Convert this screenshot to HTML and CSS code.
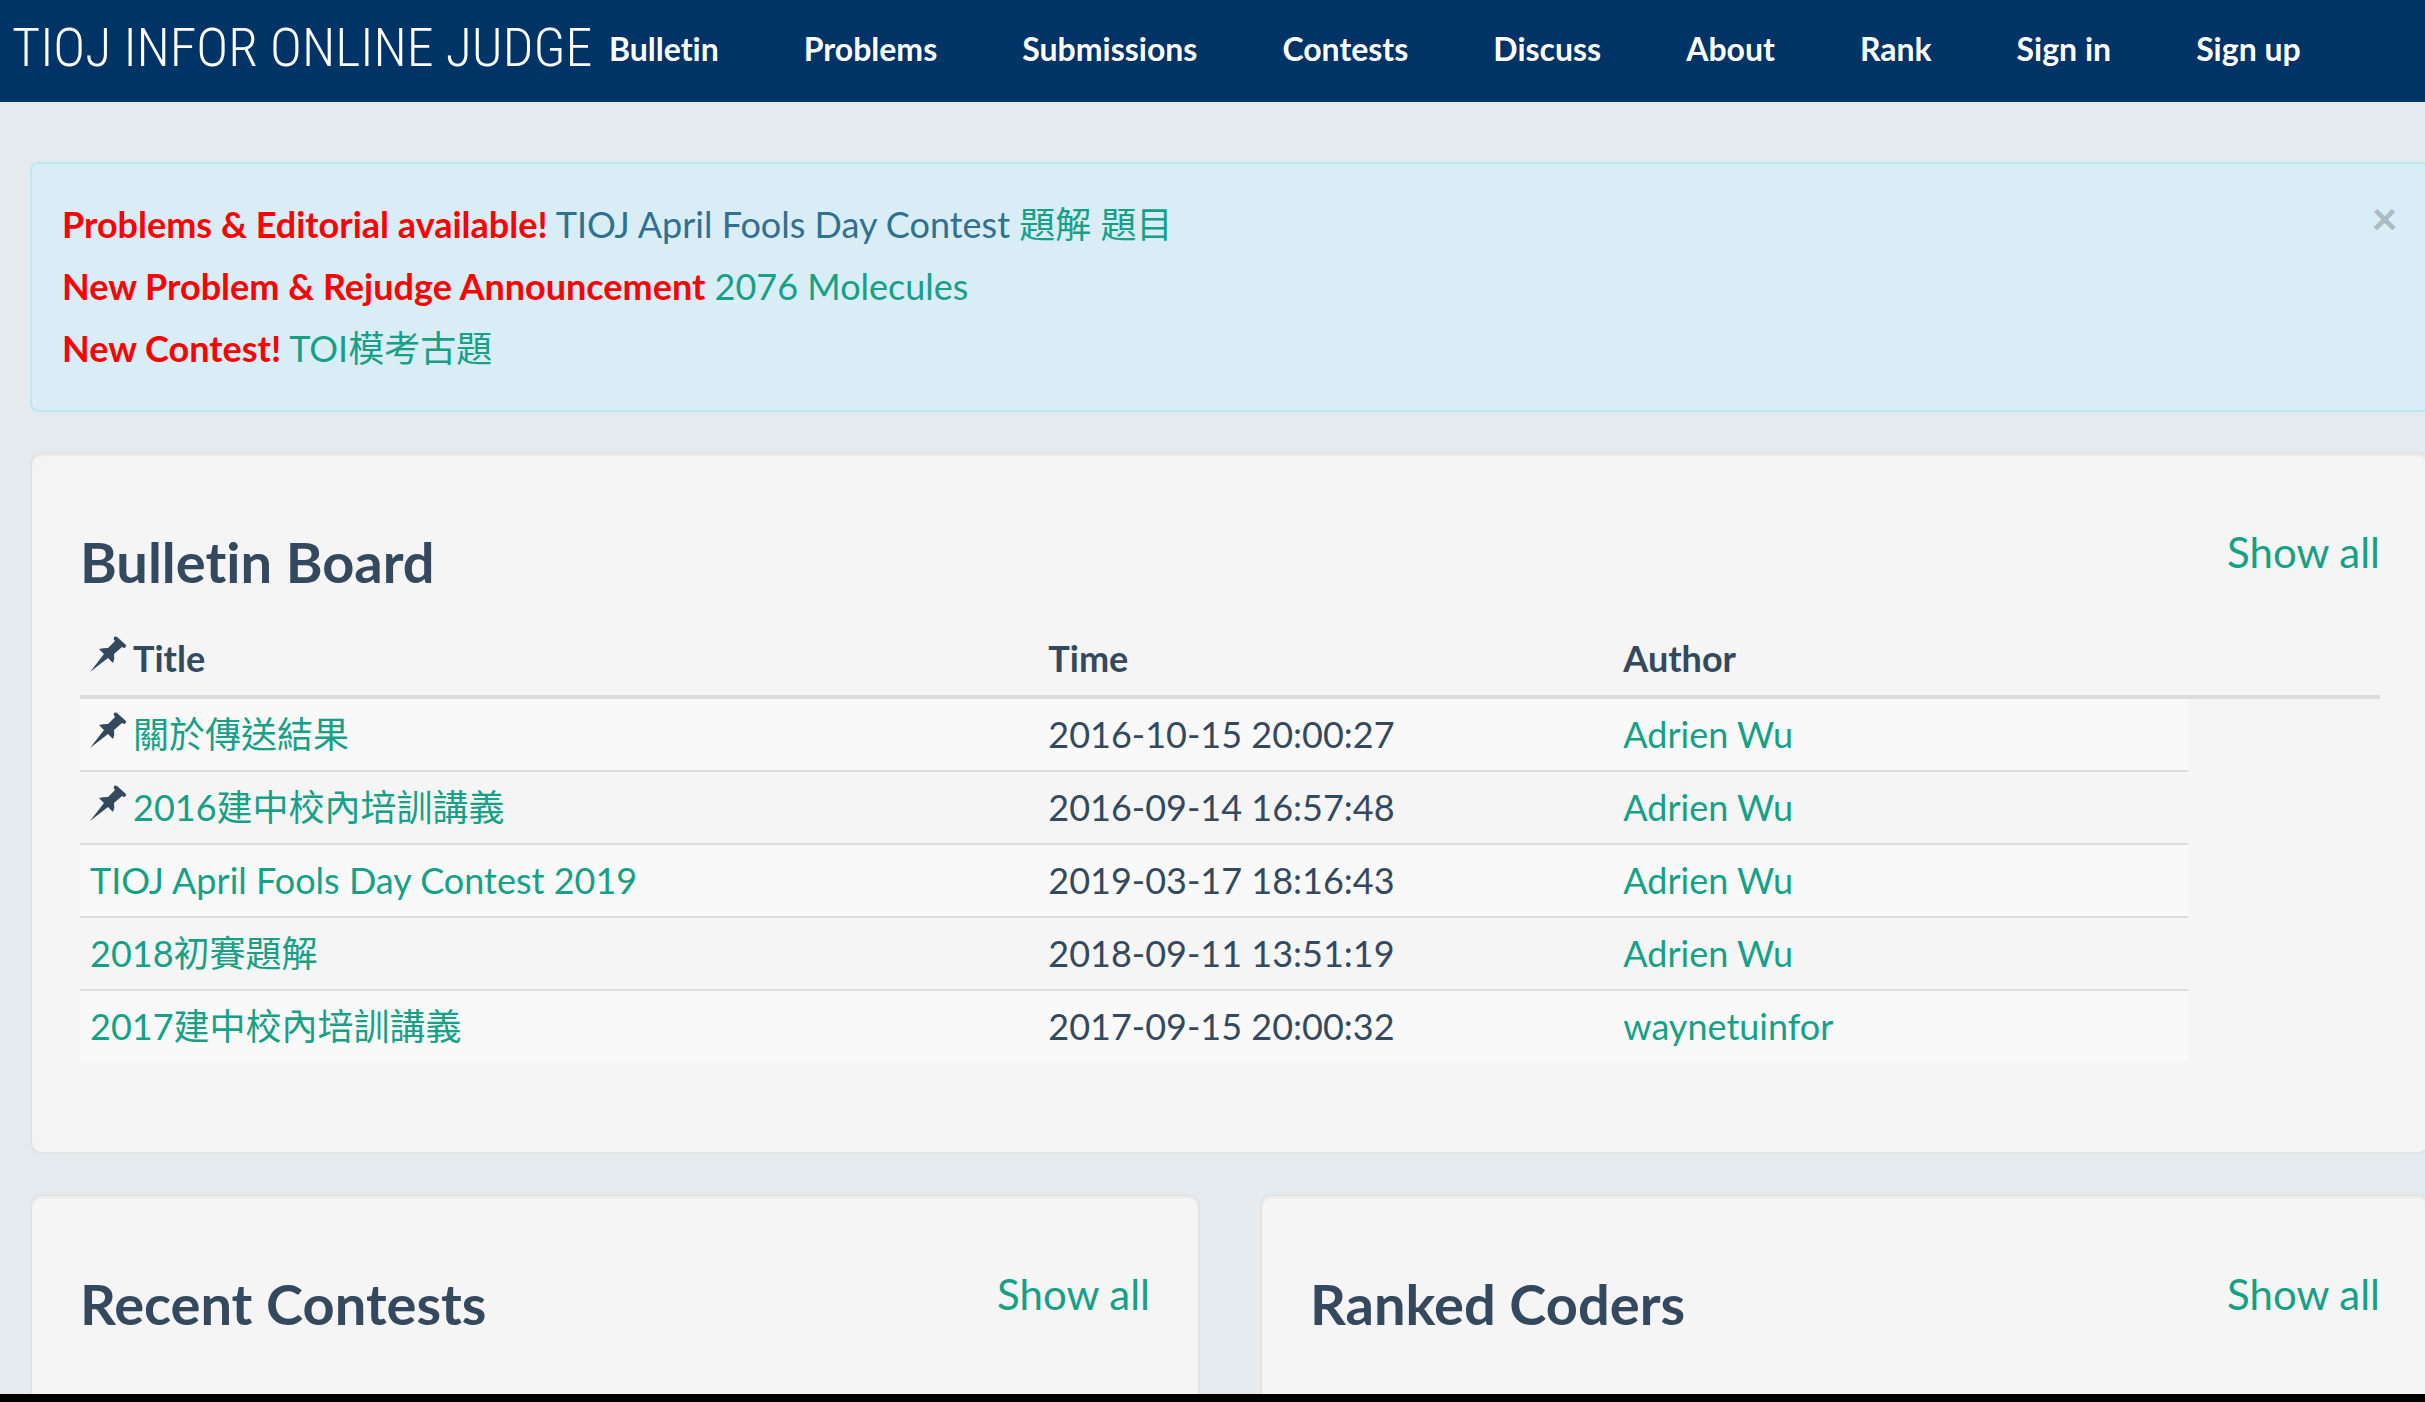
FILE: index.html
```html
<!DOCTYPE html>
<html lang="zh-Hant">
<head>
<meta charset="utf-8">
<meta name="viewport" content="width=device-width, initial-scale=1">
<title>TIOJ Infor Online Judge</title>
<link rel="stylesheet" href="styles.css">
</head>
<body>
<svg class="sprite" aria-hidden="true">
  <symbol id="pin" viewBox="0 0 36 36">
    <path d="M24 1Q26 0 27 1L36 9Q36 12 34 12L32 11L24 18Q25 23 23 27L18 22Q9 29 0 36Q7 27 14 18L9 13Q13 12 18 12L25 5Q23 3 24 1Z"/>
  </symbol>
</svg>
<header class="navbar">
  <a class="brand" href="#">TIOJ INFOR ONLINE JUDGE</a>
  <nav class="menu">
    <a href="#">Bulletin</a>
    <a href="#">Problems</a>
    <a href="#">Submissions</a>
    <a href="#">Contests</a>
    <a href="#">Discuss</a>
    <a href="#">About</a>
    <a href="#">Rank</a>
    <a href="#">Sign in</a>
    <a href="#">Sign up</a>
  </nav>
</header>
<main class="content">
  <section class="alert">
    <div class="news">
      <p><strong>Problems &amp; Editorial available!</strong> TIOJ April Fools Day Contest <a href="#">題解</a> <a href="#">題目</a></p>
      <p><strong>New Problem &amp; Rejudge Announcement</strong> <a href="#">2076 Molecules</a></p>
      <p><strong>New Contest!</strong> <a href="#">TOI模考古題</a></p>
    </div>
    <button class="close" type="button" aria-label="Close">×</button>
  </section>
  <section class="panel bulletin">
    <div class="panel-head">
      <h2>Bulletin Board</h2>
      <a href="#">Show all</a>
    </div>
    <table class="posts">
      <thead>
        <tr><th class="wide"><svg class="pin"><use href="#pin"/></svg>Title</th><th class="mid">Time</th><th class="mid">Author</th><th></th></tr>
      </thead>
      <tbody>
        <tr><td><svg class="pin"><use href="#pin"/></svg><a href="#">關於傳送結果</a></td><td>2016-10-15 20:00:27</td><td><a href="#">Adrien Wu</a></td></tr>
        <tr><td><svg class="pin"><use href="#pin"/></svg><a href="#">2016建中校內培訓講義</a></td><td>2016-09-14 16:57:48</td><td><a href="#">Adrien Wu</a></td></tr>
        <tr><td><a href="#">TIOJ April Fools Day Contest 2019</a></td><td>2019-03-17 18:16:43</td><td><a href="#">Adrien Wu</a></td></tr>
        <tr><td><a href="#">2018初賽題解</a></td><td>2018-09-11 13:51:19</td><td><a href="#">Adrien Wu</a></td></tr>
        <tr><td><a href="#">2017建中校內培訓講義</a></td><td>2017-09-15 20:00:32</td><td><a href="#">waynetuinfor</a></td></tr>
      </tbody>
    </table>
  </section>
  <div class="columns">
    <section class="panel">
      <div class="panel-head">
        <h2>Recent Contests</h2>
        <a href="#">Show all</a>
      </div>
    </section>
    <section class="panel">
      <div class="panel-head">
        <h2>Ranked Coders</h2>
        <a href="#">Show all</a>
      </div>
    </section>
  </div>
</main>
<footer class="bottom-bar"></footer>
</body>
</html>
```

FILE: styles.css
```css
* {
  box-sizing: border-box;
}

body {
  display: flex;
  flex-direction: column;
  height: 100vh;
  margin: 0;
  overflow: hidden;
  background: #e5eaee;
  color: #34495e;
  font: 36px/51px Lato, "Noto Sans CJK TC", sans-serif;
  font-variant-ligatures: none;
}

a {
  color: #16a085;
  text-decoration: none;
}

.sprite {
  position: absolute;
  width: 0;
  height: 0;
}

/* Top navigation */
.navbar {
  display: flex;
  flex: none;
  align-items: center;
  height: 102px;
  padding: 0 0 6px 12px;
  background: #003366;
  white-space: nowrap;
}

.brand {
  flex: 0 0 597px;
  color: #fff;
  font: 300 54px/92px "Roboto Condensed", "Liberation Sans Narrow", Lato, sans-serif;
}

.menu {
  display: flex;
  gap: 85px;
}

.menu a {
  color: #fff;
  font-size: 32px;
  font-weight: 700;
}

/* Page body runs slightly past the right edge of the window */
.content {
  display: flex;
  flex: 1;
  flex-direction: column;
  gap: 40px;
  min-height: 0;
  margin-right: -5px;
  padding: 60px 0 0 30px;
  overflow: hidden;
}

.alert {
  display: flex;
  flex: none;
  justify-content: space-between;
  align-items: flex-start;
  padding: 29px 30px 31px;
  border: 2px solid #bce8f1;
  border-radius: 8px;
  background: #d9edf7;
  color: #31708f;
  line-height: 62px;
}

.alert p {
  margin: 0;
}

.alert strong {
  color: #f00;
}

.close {
  padding: 0;
  border: 0;
  background: none;
  color: #000;
  font: 900 46px/50px Lato, sans-serif;
  opacity: 0.2;
  text-shadow: 0 2px 0 #fff;
}

.panel {
  flex: none;
  padding: 48px;
  border: 2px solid #e3e3e3;
  border-radius: 12px;
  background: #f5f5f5;
  box-shadow: inset 0 2px 2px rgba(0, 0, 0, 0.05);
}

.bulletin {
  padding-bottom: 90px;
}

.panel-head {
  display: flex;
  justify-content: space-between;
  align-items: flex-start;
  padding-top: 20px;
}

.panel-head h2 {
  margin: 4px 0 26px;
  font-size: 56px;
  line-height: 72px;
}

.panel-head a {
  font-size: 42px;
  line-height: 60px;
}

.columns {
  display: grid;
  flex: 1;
  grid-template-columns: 1fr 1fr;
  gap: 60px;
}

.columns .panel {
  border-bottom: 0;
  border-radius: 12px 12px 0 0;
}

/* Bulletin table */
.posts {
  width: 100%;
  table-layout: fixed;
  border-collapse: separate;
  border-spacing: 0;
}

.posts th,
.posts td {
  padding: 10px;
  text-align: left;
}

.posts th {
  padding: 9px 10px 11px;
  border-bottom: 4px solid #ddd;
}

.posts .wide {
  width: 41.667%;
}

.posts .mid {
  width: 25%;
}

.posts tbody tr + tr td {
  border-top: 2px solid #ddd;
}

.posts tbody tr:nth-child(odd) td {
  background: #f9f9f9;
}

.pin {
  width: 36px;
  height: 36px;
  margin-right: 7px;
  fill: #34495e;
}

.bottom-bar {
  flex: none;
  height: 8px;
  background: #000;
}
```
